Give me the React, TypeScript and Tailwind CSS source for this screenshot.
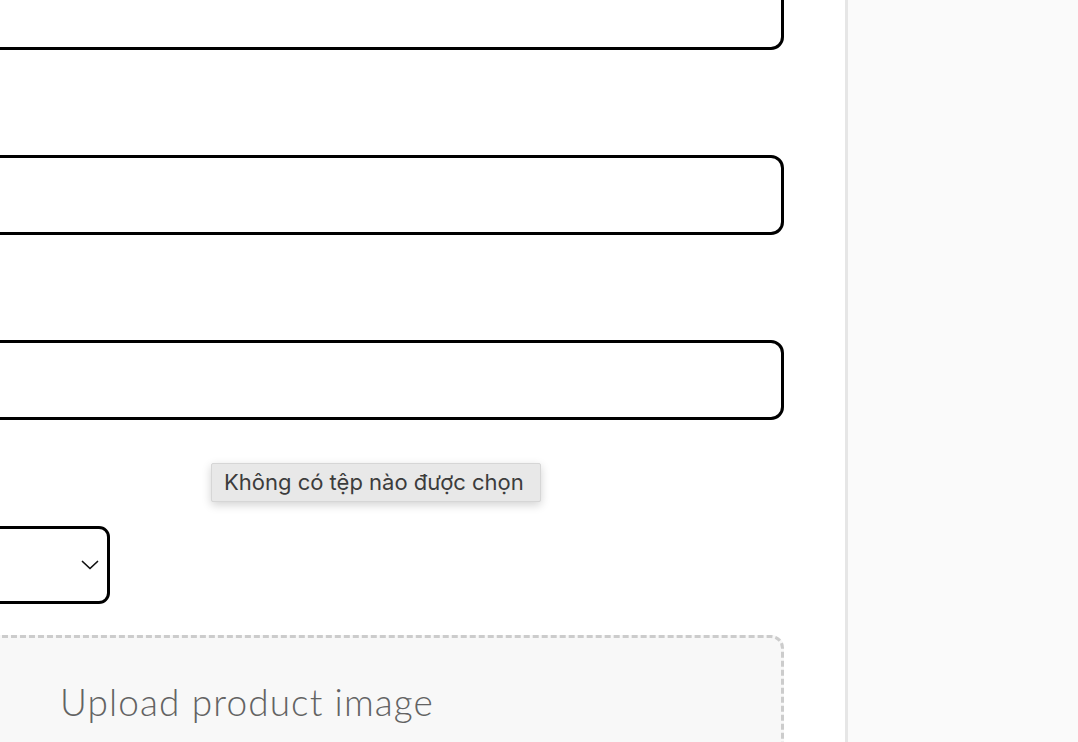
import React from 'react';

const Field = () => (
  <div className="-ml-[20px] h-[80px] rounded-[13px] border-[3px] border-black bg-white" />
);

export default function App() {
  return (
    <div className="flex h-[742px] w-full overflow-hidden bg-white">
      <main className="relative flex-1 overflow-hidden pr-[61px]">
        <div className="-mt-[30px] flex flex-col">
          <Field />
          <div className="h-[105px]" />
          <Field />
          <div className="h-[105px]" />
          <Field />
          <div className="h-[106px]" />
          <div className="-ml-[20px] flex h-[78px] w-[130px] items-center justify-end rounded-[11px] border-[3px] border-black bg-white pr-[8px]">
            <svg width="18" height="10" viewBox="0 0 18 10" fill="none" stroke="#111" strokeWidth="1.7" strokeLinecap="round" strokeLinejoin="round">
              <path d="M1.5 1.5 L9 8.5 L16.5 1.5" />
            </svg>
          </div>
          <div className="h-[31px]" />
          <div className="-ml-[20px] h-[160px] rounded-[13px] border-[3px] border-dashed border-[#cccccc] bg-[#f8f8f8] pl-[77px] pt-[42px]">
            <p className="font-['Lato',sans-serif] text-[37px] font-light leading-[1.2] tracking-[0.03em] text-[#636363]">Upload product image</p>
          </div>
        </div>

        <div className="absolute left-[211px] top-[463px] flex h-[39px] w-[330px] items-center rounded-[2px] border border-[#d6d6d6] bg-[#e8e8e8] px-[12px] shadow-[0_3px_10px_rgba(0,0,0,0.18)]">
          <span className="whitespace-nowrap font-['Inter',sans-serif] text-[22px] text-[#3c3c3c]">Không có tệp nào được chọn</span>
        </div>
      </main>
      <aside className="w-[233px] shrink-0 border-l-[3px] border-[#e6e6e6] bg-[#fafafa]" />
    </div>
  );
}
